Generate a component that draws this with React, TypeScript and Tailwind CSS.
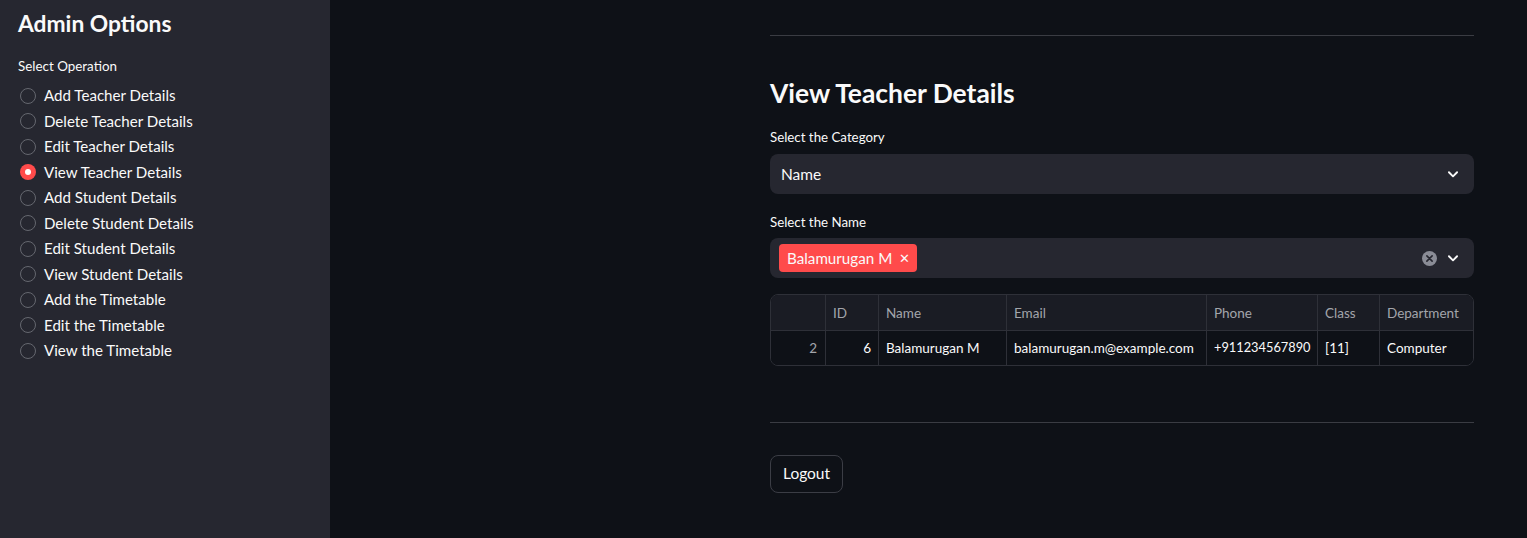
import React from "react";

const items = [
  "Add Teacher Details",
  "Delete Teacher Details",
  "Edit Teacher Details",
  "View Teacher Details",
  "Add Student Details",
  "Delete Student Details",
  "Edit Student Details",
  "View Student Details",
  "Add the Timetable",
  "Edit the Timetable",
  "View the Timetable",
];

const Chevron = () => (
  <svg width="14" height="14" viewBox="0 0 24 24" fill="none" stroke="#fafafa" strokeWidth="3.2" strokeLinecap="round" strokeLinejoin="round">
    <path d="M5 9l7 7 7-7" />
  </svg>
);

export default function App() {
  const font = { fontFamily: "Lato, 'Noto Sans', sans-serif" };
  return (
    <div className="flex w-[1527px] h-[538px] bg-[#0e1117] text-[#fafafa] overflow-hidden" style={font}>
      <div className="w-[330px] h-full bg-[#262730] pl-[18px] pt-[9px] shrink-0">
        <div className="text-[22.8px] font-bold leading-[29px]">Admin Options</div>
        <div className="text-[13.4px] leading-[20px] mt-[18px]">Select Operation</div>
        <div className="mt-[7px] flex flex-col">
          {items.map((it, i) => (
            <div key={it} className="h-[25.5px] flex items-center">
              {i === 3 ? (
                <div className="ml-[2px] w-[16px] h-[16px] rounded-full bg-[#ff4b4b] flex items-center justify-center">
                  <div className="w-[6px] h-[6px] rounded-full bg-white" />
                </div>
              ) : (
                <div className="ml-[2px] w-[16px] h-[16px] rounded-full border border-[#65676f]" />
              )}
              <span className="ml-[8px] text-[15.1px]">{it}</span>
            </div>
          ))}
        </div>
      </div>
      <div className="flex-1 pl-[440px] pt-[35px]">
        <div className="w-[704px]">
          <div className="h-px bg-[#3a3c43]" />
          <div className="mt-[40px] text-[26.4px] font-bold leading-[34px]">View Teacher Details</div>
          <div className="mt-[17px] text-[13.3px] leading-[20px]">Select the Category</div>
          <div className="mt-[7px] h-[40px] rounded-[8px] bg-[#262730] flex items-center justify-between pl-[11px] pr-[14px]">
            <span className="text-[15.5px] pt-[1px]">Name</span>
            <Chevron />
          </div>
          <div className="mt-[18px] text-[13.3px] leading-[20px]">Select the Name</div>
          <div className="mt-[6px] h-[40px] rounded-[8px] bg-[#262730] flex items-center justify-between pl-[9px] pr-[14px]">
            <div className="h-[28px] rounded-[4px] bg-[#ff4b4b] flex items-center pl-[8px] pr-[7px]">
              <span className="text-[15.2px]">Balamurugan M</span>
              <span className="ml-[7px] text-[13px] leading-none">✕</span>
            </div>
            <div className="flex items-center gap-[9px]">
              <div className="w-[15px] h-[15px] rounded-full bg-[#8a8c96] flex items-center justify-center">
                <svg width="7" height="7" viewBox="0 0 8 8" stroke="#262730" strokeWidth="1.8" strokeLinecap="round">
                  <path d="M1 1l6 6M7 1l-6 6" />
                </svg>
              </div>
              <Chevron />
            </div>
          </div>
          <div className="mt-[16px] rounded-[8px] border border-[#2e3038] overflow-hidden text-[13.5px]">
            <div className="grid grid-cols-[55px_53px_128px_200px_111px_62px_1fr] h-[36px] bg-[#1a1c24] text-[#a3a5ab] border-b border-[#2e3038]">
              <div className="border-r border-[#2e3038]" />
              <div className="border-r border-[#2e3038] flex items-center pl-[7px] pt-[1px]">ID</div>
              <div className="border-r border-[#2e3038] flex items-center pl-[7px] pt-[1px]">Name</div>
              <div className="border-r border-[#2e3038] flex items-center pl-[7px] pt-[1px]">Email</div>
              <div className="border-r border-[#2e3038] flex items-center pl-[7px] pt-[1px]">Phone</div>
              <div className="border-r border-[#2e3038] flex items-center pl-[7px] pt-[1px]">Class</div>
              <div className="flex items-center pl-[7px] pt-[1px]">Department</div>
            </div>
            <div className="grid grid-cols-[55px_53px_128px_200px_111px_62px_1fr] h-[34px] bg-[#0e1117]">
              <div className="border-r border-[#2e3038] flex items-center justify-end pr-[8px] text-[#a3a5ab]">2</div>
              <div className="border-r border-[#2e3038] flex items-center justify-end pr-[7px]">6</div>
              <div className="border-r border-[#2e3038] flex items-center pl-[7px]">Balamurugan M</div>
              <div className="border-r border-[#2e3038] flex items-center pl-[7px]">balamurugan.m@example.com</div>
              <div className="border-r border-[#2e3038] flex items-center pl-[7px] text-[12.8px]">+911234567890</div>
              <div className="border-r border-[#2e3038] flex items-center pl-[7px]">[11]</div>
              <div className="flex items-center pl-[7px]">Computer</div>
            </div>
          </div>
          <div className="mt-[56px] h-px bg-[#3a3c43]" />
          <button className="mt-[32px] h-[38px] px-[12px] rounded-[8px] border border-[#3b3d45] bg-[#0e1117] text-[15.5px] text-[#fafafa]" style={font}>
            Logout
          </button>
        </div>
      </div>
    </div>
  );
}
